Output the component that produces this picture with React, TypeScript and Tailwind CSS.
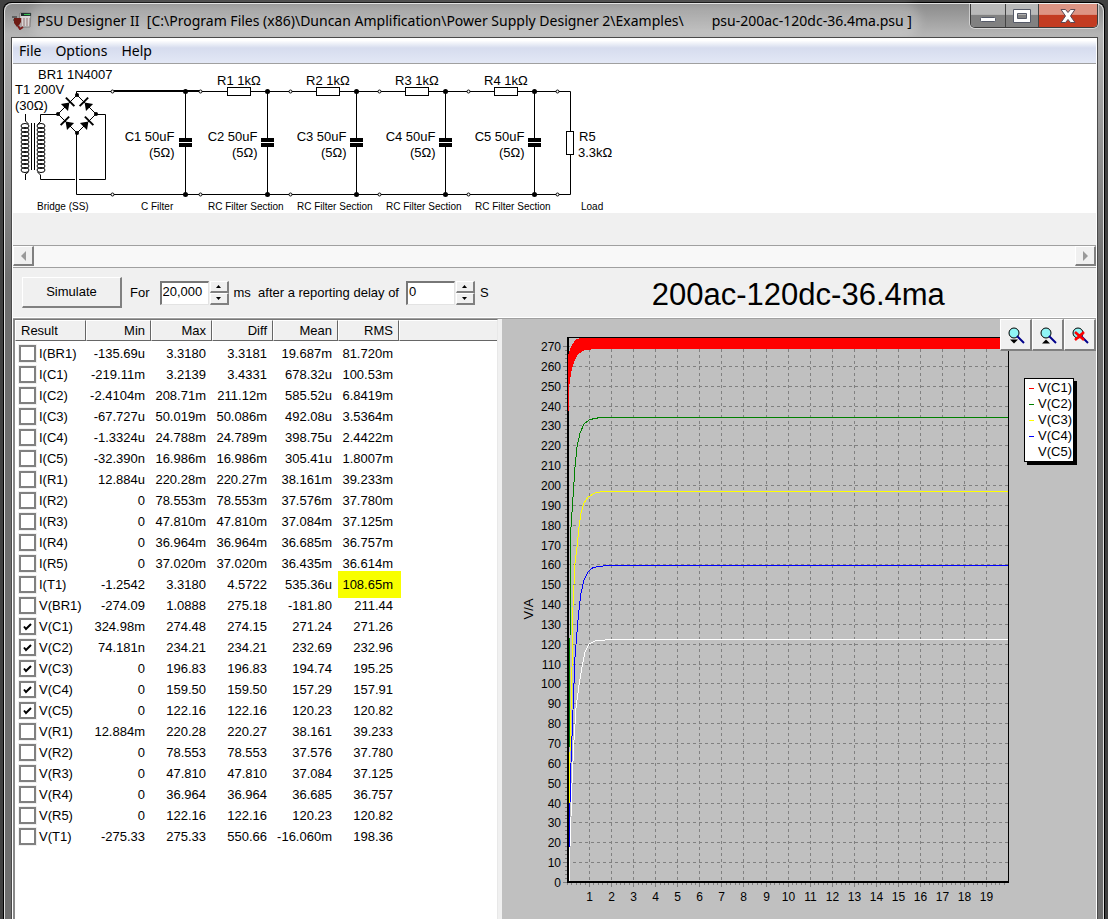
import { useState } from "react";

const results = [
  ["I(BR1)", "-135.69u", "3.3180", "3.3181", "19.687m", "81.720m"],
  ["I(C1)", "-219.11m", "3.2139", "3.4331", "678.32u", "100.53m"],
  ["I(C2)", "-2.4104m", "208.71m", "211.12m", "585.52u", "6.8419m"],
  ["I(C3)", "-67.727u", "50.019m", "50.086m", "492.08u", "3.5364m"],
  ["I(C4)", "-1.3324u", "24.788m", "24.789m", "398.75u", "2.4422m"],
  ["I(C5)", "-32.390n", "16.986m", "16.986m", "305.41u", "1.8007m"],
  ["I(R1)", "12.884u", "220.28m", "220.27m", "38.161m", "39.233m"],
  ["I(R2)", "0", "78.553m", "78.553m", "37.576m", "37.780m"],
  ["I(R3)", "0", "47.810m", "47.810m", "37.084m", "37.125m"],
  ["I(R4)", "0", "36.964m", "36.964m", "36.685m", "36.757m"],
  ["I(R5)", "0", "37.020m", "37.020m", "36.435m", "36.614m"],
  ["I(T1)", "-1.2542", "3.3180", "4.5722", "535.36u", "108.65m"],
  ["V(BR1)", "-274.09", "1.0888", "275.18", "-181.80", "211.44"],
  ["V(C1)", "324.98m", "274.48", "274.15", "271.24", "271.26"],
  ["V(C2)", "74.181n", "234.21", "234.21", "232.69", "232.96"],
  ["V(C3)", "0", "196.83", "196.83", "194.74", "195.25"],
  ["V(C4)", "0", "159.50", "159.50", "157.29", "157.91"],
  ["V(C5)", "0", "122.16", "122.16", "120.23", "120.82"],
  ["V(R1)", "12.884m", "220.28", "220.27", "38.161", "39.233"],
  ["V(R2)", "0", "78.553", "78.553", "37.576", "37.780"],
  ["V(R3)", "0", "47.810", "47.810", "37.084", "37.125"],
  ["V(R4)", "0", "36.964", "36.964", "36.685", "36.757"],
  ["V(R5)", "0", "122.16", "122.16", "120.23", "120.82"],
  ["V(T1)", "-275.33", "275.33", "550.66", "-16.060m", "198.36"],
];

const legend = [
  { name: "V(C1)", color: "bg-[#ff0000]" },
  { name: "V(C2)", color: "bg-[#008000]" },
  { name: "V(C3)", color: "bg-[#ffff00]" },
  { name: "V(C4)", color: "bg-[#0000ff]" },
  { name: "V(C5)", color: "bg-white" },
];

const raised =
  "bg-[#f0f0f0] border-t border-l border-b-2 border-r-2 border-t-white border-l-white border-b-[#808080] border-r-[#808080]";

function AppIcon() {
  return (
    <svg width="20" height="18" viewBox="0 0 20 18" aria-hidden="true">
      <path d="M8 1h11l-1 14H7z" fill="#d8d4d4" stroke="#777" />
      <rect x="9" y="1" width="10" height="3" fill="#1d2b2b" />
      <rect x="12" y="2" width="6" height="1" fill="#2fc04a" />
      <path d="M8 7h10M8 9h10M8 11h10M8 13h10" stroke="#8d6f6f" strokeDasharray="2 1" />
      <path d="M0 5h5M1 8h4" stroke="#222" />
      <path d="M2 6h7v4l-2 3-2 2-3-4z" fill="#6d1b14" />
      <path d="M6 14l2 3 3-2" fill="none" stroke="#7d1d1d" strokeWidth="2" />
    </svg>
  );
}

function TitleBar() {
  return (
    <div className="flex h-[33px] items-start pr-[5px] pl-[7px]">
      <div className="flex h-full items-center">
        <AppIcon />
        <h1 className="ml-[5px] rounded-full bg-white/20 font-['Noto_Sans',sans-serif] text-[14px] whitespace-pre text-black shadow-[0_0_10px_8px_rgba(255,255,255,0.2)]">
          {"PSU Designer II  [C:\\Program Files (x86)\\Duncan Amplification\\Power Supply Designer 2\\Examples\\"}
          <span className="pl-7">psu-200ac-120dc-36.4ma.psu ]</span>
        </h1>
      </div>
      <div className="ml-auto flex h-6 overflow-hidden rounded-b-[5px] border border-t-0 border-[#3c3c3c] shadow-[0_0_0_1px_rgba(255,255,255,0.5)]">
        <button
          aria-label="Minimize"
          className="flex w-[35px] items-center justify-center border-r border-[#444] bg-linear-to-b from-[#b9b9b9] from-45% to-[#818181] to-50%"
        >
          <svg width="18" height="16" viewBox="0 0 18 16">
            <rect x="1.5" y="9.5" width="15" height="4" rx="1" fill="#fff" stroke="#555a68" />
          </svg>
        </button>
        <button
          aria-label="Maximize"
          className="flex w-[33px] items-center justify-center border-r border-[#444] bg-linear-to-b from-[#b9b9b9] from-45% to-[#818181] to-50%"
        >
          <svg width="18" height="16" viewBox="0 0 18 16">
            <path d="M.5 1.5h17v13H.5zM4.500 5.500v5h9v-5z" fill="#fff" fillRule="evenodd" stroke="#555a68" />
          </svg>
        </button>
        <button
          aria-label="Close"
          className="flex w-[58px] items-center justify-center bg-linear-to-b from-[#dd9484] from-45% to-[#c33c22] to-50%"
        >
          <svg width="18" height="16" viewBox="0 0 18 16">
            <path
              d="M2 1.5h4.500L9 4.500l2.500-3H16L11.500 8l4.500 6.500h-4.500L9 11.500l-2.500 3H2L6.500 8z"
              fill="#fff"
              stroke="#5b4a56"
            />
          </svg>
        </button>
      </div>
    </div>
  );
}

function Diode({ x, y, angle }: { x: number; y: number; angle: number }) {
  return (
    <g transform={`translate(${x} ${y}) rotate(${angle})`}>
      <path d="M-5 5H5L0-2z" />
      <rect x="-6" y="-4" width="12" height="2" />
    </g>
  );
}

function Capacitor({ x, name, gap }: { x: number; name: string; gap: number }) {
  return (
    <g>
      <path d={`M${x} 27v47M${x} 83v47`} stroke="#000" />
      <rect x={x - 6.5} y="74" width="13" height="4" />
      <rect x={x - 6.5} y="79" width="13" height="4" />
      <circle cx={x} cy="27.5" r="2.5" />
      <circle cx={x} cy="130.5" r="2.5" />
      <text x={x - gap} y="77" textAnchor="end">
        {name} 50uF
      </text>
      <text x={x - gap} y="93" textAnchor="end">
        (5Ω)
      </text>
    </g>
  );
}

function Coil({ x }: { x: number }) {
  return (
    <g fill="none" stroke="#000">
      {Array.from({ length: 12 }, (_, i) => (
        <ellipse key={i} cx={x} cy={62 + i * 4} rx="4" ry="2.5" />
      ))}
    </g>
  );
}

function Schematic() {
  const sections = [0, 89, 178, 267];
  const terminals = [99.5, 187.5, 277.5, 366.5, 455.5, 544.5];
  return (
    <svg
      width="620"
      height="149"
      viewBox="0 0 620 149"
      className="block font-['Liberation_Sans',sans-serif] text-[13px]"
      role="img"
      aria-label="Power supply schematic"
    >
      {/* transformer */}
      <Coil x={12} />
      <Coil x={28} />
      <path d="M18.5 59v47M21.5 59v47M12.5 50v7l3 3M12.5 116v-6l3-2" stroke="#000" fill="none" />
      <path d="M45 50.5H27.5v7l-3 3M24.5 108l3 3v4.5H92.5V50.5H83" stroke="#000" fill="none" />

      {/* bridge rectifier */}
      <path d="M64 31L45 50l19 19 19-19z" fill="none" stroke="#000" />
      <Diode x={55} y={40} angle={45} />
      <Diode x={73} y={40} angle={-45} />
      <Diode x={54} y={59} angle={-45} />
      <Diode x={74} y={59} angle={45} />
      <circle cx="64" cy="31" r="2" />
      <circle cx="45" cy="50" r="2" />
      <circle cx="83" cy="50" r="2" />
      <circle cx="64" cy="69" r="2" />
      <rect x="62" y="114" width="4" height="4" fill="#fff" />
      <path d="M63.5 31v-3.500H100M63.5 69v61.500H557.5V91M557.5 67V27.5H100" fill="none" stroke="#000" />
      <path d="M101 27h86" stroke="#000" strokeWidth="2" />

      <Capacitor x={172.5} name="C1" gap={11} />
      {sections.map((dx, i) => (
        <g key={dx}>
          <Capacitor x={254.5 + dx} name={`C${i + 2}`} gap={10} />
          <rect x={214.5 + dx} y="23.5" width="23" height="8" fill="#fff" stroke="#000" />
          <text x={204 + dx} y="21">{`R${i + 1} 1kΩ`}</text>
          <text x={195 + dx} y="146" className="text-[10px]">
            RC Filter Section
          </text>
        </g>
      ))}
      {terminals.map((x) => (
        <g key={x} fill="#fff" stroke="#000">
          <circle cx={x} cy="27.5" r="1.5" />
          <circle cx={x} cy="130.5" r="1.5" />
        </g>
      ))}
      <rect x="553.5" y="67.5" width="7" height="23" fill="#fff" stroke="#000" />

      <text x="25" y="15">BR1 1N4007</text>
      <text x="2" y="30">T1 200V</text>
      <text x="2" y="46">(30Ω)</text>
      <text x="566" y="77">R5</text>
      <text x="565" y="93">3.3kΩ</text>
      <text x="24" y="146" className="text-[10px]">Bridge (SS)</text>
      <text x="128" y="146" className="text-[10px]">C Filter</text>
      <text x="568" y="146" className="text-[10px]">Load</text>
    </svg>
  );
}

function Spinner({ id, value }: { id: string; value: string }) {
  const [text, setText] = useState(value);
  return (
    <div className="flex h-6 gap-px">
      <input
        id={id}
        type="text"
        value={text}
        onChange={(e) => setText(e.target.value)}
        className="h-6 w-[49px] border-t-2 border-r border-b border-l-2 border-t-[#777] border-r-[#e3e3e3] border-b-[#e3e3e3] border-l-[#777] bg-white pb-1 pl-px leading-4 outline-none"
      />
      <div className="flex w-[19px] flex-col">
        <button aria-label="Increase" className={`flex flex-1 items-center justify-center ${raised}`}>
          <svg width="5" height="3" viewBox="0 0 5 3"><path d="M0 3h5L2.5 0z" /></svg>
        </button>
        <button aria-label="Decrease" className={`flex flex-1 items-center justify-center ${raised}`}>
          <svg width="5" height="3" viewBox="0 0 5 3"><path d="M0 0h5L2.5 3z" /></svg>
        </button>
      </div>
    </div>
  );
}

function Toolbar() {
  return (
    <div className="flex h-[50px] items-center border-b border-white pl-[9px]">
      <button className={`h-[31px] w-[100px] ${raised}`}>Simulate</button>
      <label htmlFor="duration" className="mr-[10px] ml-2">For</label>
      <Spinner id="duration" value="20,000" />
      <label htmlFor="delay" className="mr-[7px] ml-[5px] whitespace-pre">{"ms  after a reporting delay of"}</label>
      <Spinner id="delay" value="0" />
      <span className="ml-[5px]">S</span>
      <h2 className="flex-1 pt-1 pl-3 text-center text-[31px] leading-8">200ac-120dc-36.4ma</h2>
    </div>
  );
}

function ResultsTable() {
  const th = `h-[21px] p-0 pr-[5px] text-right font-normal bg-[#f0f0f0] border-t border-l border-t-white border-l-white border-r border-b border-r-[#666] border-b-[#666]`;
  return (
    <table className="w-full table-fixed border-separate border-spacing-0 leading-4">
      <colgroup>
        <col className="w-[71px]" />
        <col className="w-[65px]" />
        <col className="w-[61px]" />
        <col className="w-[61px]" />
        <col className="w-[65px]" />
        <col className="w-[61px]" />
        <col />
      </colgroup>
      <thead>
        <tr>
          <th className="h-[21px] border-t border-r border-b border-l border-t-white border-r-[#666] border-b-[#666] border-l-white bg-[#f0f0f0] p-0 pl-[5px] text-left font-normal">
            Result
          </th>
          <th className={th}>Min</th>
          <th className={th}>Max</th>
          <th className={th}>Diff</th>
          <th className={th}>Mean</th>
          <th className={th}>RMS</th>
          <th className="h-[21px] border-t border-b border-l border-t-white border-b-[#666] border-l-white bg-[#f0f0f0]"></th>
        </tr>
      </thead>
      <tbody className="before:block before:h-[2px]">
        {results.map(([name, ...values]) => (
          <tr key={name}>
            <td className="h-[21px] p-0 pl-1">
              <label className="flex items-center gap-[3px]">
                <span className="grid size-[17px] place-items-center">
                  <input
                    type="checkbox"
                    defaultChecked={/^V\(C\d\)$/.test(name)}
                    className="peer col-start-1 row-start-1 size-[17px] appearance-none border-2 border-[#808080] bg-white shadow-[0_0_0_1px_#f0f0f0]"
                  />
                  <svg width="9" height="8" viewBox="0 0 9 8" className="invisible col-start-1 row-start-1 peer-checked:visible">
                    <path d="M1 3.5l2 2.500 5-5" fill="none" stroke="#000" strokeWidth="2" />
                  </svg>
                </span>
                {name}
              </label>
            </td>
            {values.map((v, i) =>
              v === "108.65m" ? (
                <td key={i} className="relative h-[21px] p-0 pr-[6px] text-right">
                  <span className="absolute -top-[3px] -right-[2px] -bottom-[3px] left-0 bg-[#f8ff00]"></span>
                  <span className="relative">{v}</span>
                </td>
              ) : (
                <td key={i} className="h-[21px] p-0 pr-[6px] text-right">{v}</td>
              )
            )}
            <td></td>
          </tr>
        ))}
      </tbody>
    </table>
  );
}

const left = 65;
const right = 506;
const top = 18;
const bottom = 563;
const xAt = (t: number) => left + Math.round(t * 22.06) + 0.5;
const yAt = (v: number) => bottom - Math.round(v * 1.985) + 0.5;

function Chart() {
  const volts = Array.from({ length: 28 }, (_, i) => i * 10);
  const times = Array.from({ length: 19 }, (_, i) => i + 1);
  return (
    <svg
      viewBox="0 0 594 600"
      shapeRendering="crispEdges"
      className="block h-auto w-full font-['Liberation_Sans',sans-serif] text-[12px]"
      role="img"
      aria-label="Voltage against time"
    >
      {/* grid, ticks and axis labels */}
      {volts.map((v) => (
        <g key={v}>
          <path d={`M${left} ${yAt(v)}H${right}`} stroke="#808080" strokeDasharray="3 3" />
          <path d={`M61 ${yAt(v)}h4`} stroke="#808080" />
          {v < 270 && (
            <path d={`M63 ${yAt(v + 2)}h2M63 ${yAt(v + 4)}h2M63 ${yAt(v + 6)}h2M63 ${yAt(v + 8)}h2`} stroke="#808080" />
          )}
          <text x="59" y={yAt(v) + 4} textAnchor="end">{v}</text>
        </g>
      ))}
      {times.map((t) => (
        <g key={t}>
          <path d={`M${xAt(t)} ${top}V${bottom}`} stroke="#808080" strokeDasharray="3 3" />
          <path d={`M${xAt(t)} ${bottom + 1}v4`} stroke="#808080" />
          <text x={xAt(t)} y="582" textAnchor="middle">{t}</text>
        </g>
      ))}
      {Array.from({ length: 100 }, (_, i) => (
        <path key={i} d={`M${xAt(i / 5)} ${bottom + 1}v2`} stroke="#808080" />
      ))}
      <text transform="translate(31 290) rotate(-90)" textAnchor="middle" className="text-[13px]">V/A</text>

      {/* plot frame */}
      <path d="M65 18.5H506.5V563.5" fill="none" stroke="#000" />
      <path d="M66 18V564M65 563H507" fill="none" stroke="#000" strokeWidth="2" />

      {/* V(C1) ripple band, then the filtered outputs */}
      <path
        d="M66 92V37L69 28 73 21 78 19H506V30H95L83 31 76 35 72 43 69 54 67 69V92z"
        fill="#ff0000"
      />
      <path d="M67 429L67.5 400 68.5 241 69 208 71 178 73 148 75 128 78 114 82 105 88 100.5 98 98.5H506" fill="none" stroke="#008000" />
      <path d="M67.5 528V454L69 391 70 348 71 288 73 244 75 228 77 208 79 194 82 184 86 178 93 174 101 172.5H506" fill="none" stroke="#ffff00" />
      <path d="M67.5 552V528L68 484 69 444 71 391 73 338 76 301 77 291 79 274 82 261 86 253 91 248.5 104 246.5H506" fill="none" stroke="#0000ff" />
      <path d="M67.5 562L68 528 69 498 70 464 72 421 74 389 77 366 80 348 83 333 87 325 93 322 108 320.5H506" fill="none" stroke="#fff" />
    </svg>
  );
}

function Magnifier({ mark }: { mark: "down" | "up" | "cancel" }) {
  return (
    <svg width="18" height="18" viewBox="0 0 18 18" aria-hidden="true">
      <circle cx="7" cy="7" r="5" fill="#8ff5f5" stroke="#000" />
      <path d="M10 10l7 7" stroke="#00008b" strokeWidth="2" />
      {mark === "down" && <path d="M3 13.5h8l-4 4z" />}
      {mark === "up" && <path d="M3 17.5h8l-4-4z" />}
      {mark === "cancel" && <path d="M4 6l9 8M13 6l-9 8" stroke="#f00" strokeWidth="2.5" />}
    </svg>
  );
}

function ChartPanel() {
  return (
    <div className="relative min-w-0 flex-1 bg-[#c0c0c0]">
      <Chart />
      <div className="absolute top-0 right-0 flex">
        <button aria-label="Zoom in" className={`flex h-8 w-8 items-center justify-center ${raised}`}>
          <Magnifier mark="down" />
        </button>
        <button aria-label="Zoom out" className={`flex h-8 w-8 items-center justify-center ${raised}`}>
          <Magnifier mark="up" />
        </button>
        <button aria-label="Reset zoom" className={`flex h-8 w-8 items-center justify-center ${raised}`}>
          <Magnifier mark="cancel" />
        </button>
      </div>
      <ul className="absolute top-[59px] right-[22px] border border-black bg-white py-px pr-px pl-1 shadow-[3px_3px_0_#000]">
        {legend.map((item) => (
          <li key={item.name} className="flex items-center gap-1 leading-4">
            <span className={`h-px w-[5px] ${item.color}`}></span>
            {item.name}
          </li>
        ))}
      </ul>
    </div>
  );
}

export default function App() {
  return (
    <div className="flex min-h-screen flex-col bg-[#404040] px-[3px] pt-[2px] font-['Liberation_Sans',Arial,sans-serif] text-[13px] text-black">
      <div className="flex flex-1 flex-col rounded-t-lg border border-b-0 border-black">
        <div className="flex flex-1 flex-col rounded-t-lg border border-b-0 border-[#e0e0e0] bg-linear-to-b from-[#8c8c8c] via-[#b4b4b4] via-[30px] to-[#6f6f6f] to-[274px]">
          <TitleBar />
          <div className="mr-[5px] ml-[6px] flex flex-1 flex-col border border-b-0 border-[#4a4a4a] bg-[#f0f0f0]">
            <div className="flex flex-1 flex-col border-x border-white">
              <nav className="flex h-[26px] items-center gap-[14px] border-b border-[#a0a0a0] bg-linear-to-b from-white from-10% via-[#d6dcee] via-40% to-[#e3e8f6] pl-[6px] font-['Noto_Sans',sans-serif] text-[14px]">
                <button>File</button>
                <button>Options</button>
                <button>Help</button>
              </nav>
              <div className="overflow-hidden bg-white">
                <Schematic />
              </div>
              <div className="h-8"></div>
              <div className="flex h-[23px] justify-between border-t border-b border-[#a0a0a0] bg-[#f8f8f8]">
                <button aria-label="Scroll left" className={`flex h-5 w-[21px] items-center justify-center ${raised}`}>
                  <svg width="5" height="10" viewBox="0 0 5 10"><path d="M5 0v10L0 5z" fill="#999" /></svg>
                </button>
                <button aria-label="Scroll right" className={`flex h-5 w-[21px] items-center justify-center ${raised}`}>
                  <svg width="5" height="10" viewBox="0 0 5 10"><path d="M0 0v10l5-5z" fill="#999" /></svg>
                </button>
              </div>
              <Toolbar />
              <div className="flex flex-1 border-t border-[#a0a0a0]">
                <div className="w-[485px] shrink-0 border-t border-r border-l-2 border-t-[#777] border-r-[#e8e8e8] border-l-[#8a8a8a] bg-white">
                  <ResultsTable />
                </div>
                <div className="w-1 shrink-0 bg-[#f0f0f0]"></div>
                <ChartPanel />
              </div>
            </div>
          </div>
        </div>
      </div>
    </div>
  );
}
